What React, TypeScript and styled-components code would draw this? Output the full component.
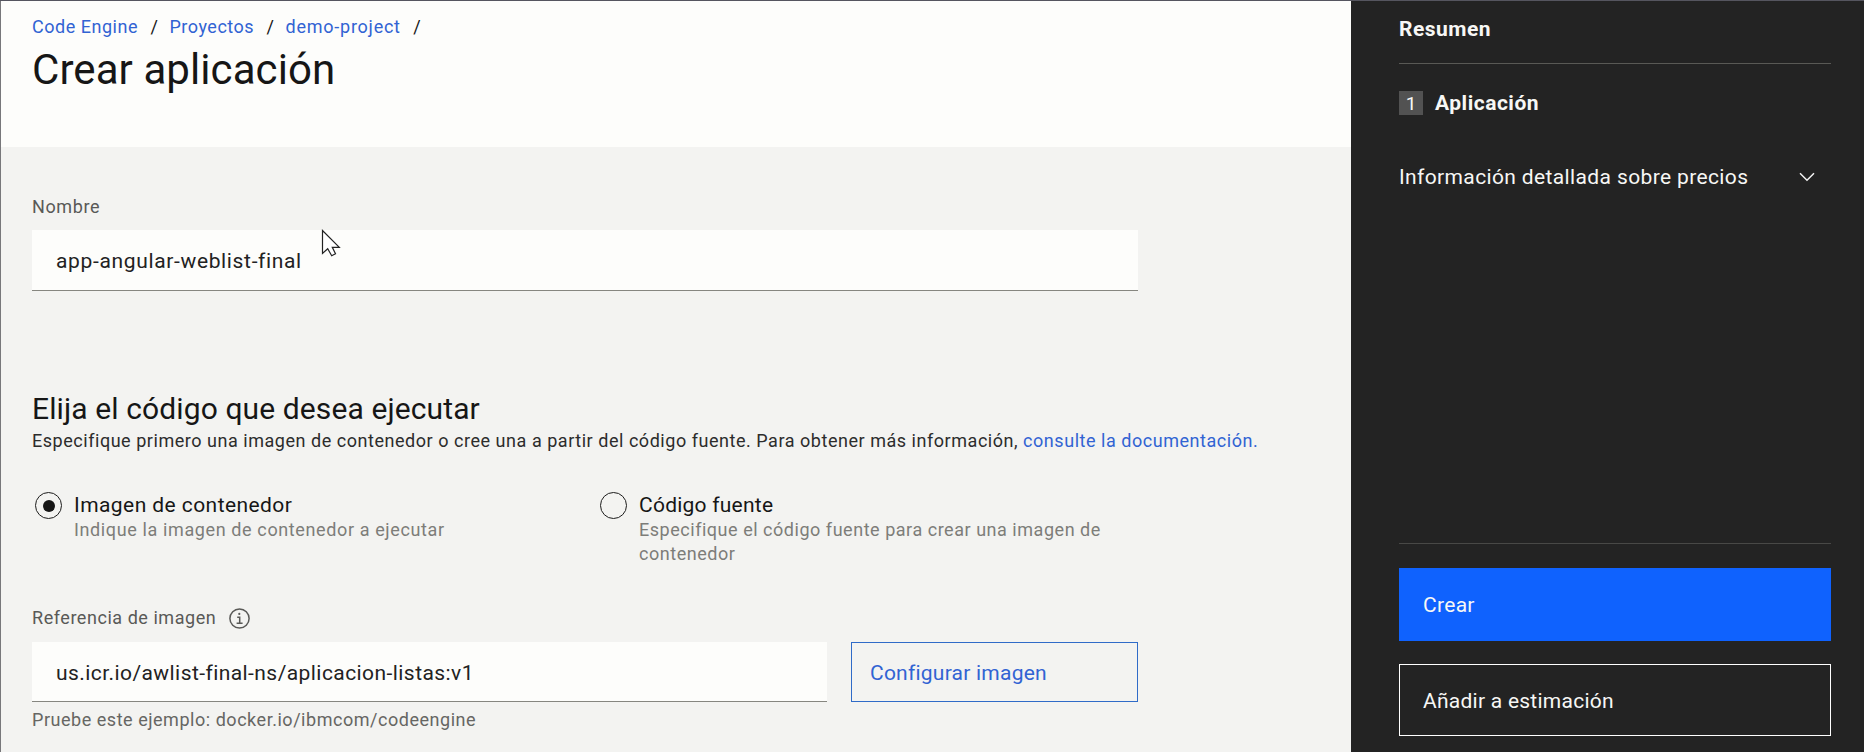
import React from 'react';
import styled, { createGlobalStyle } from 'styled-components';

const GlobalStyle = createGlobalStyle`
  *, *::before, *::after { box-sizing: border-box; }
  body {
    margin: 0;
    background: #f3f3f1;
    font-family: Roboto, "Liberation Sans", sans-serif;
    color: #161616;
  }
  h1, h2, p { margin: 0; font-weight: 400; }
`;

const Page = styled.div`
  display: flex;
  width: 1864px;
  height: 752px;
  overflow: hidden;
  border-top: 1px solid #55555f;
`;

const Main = styled.main`
  width: 1351px;
  border-left: 1px solid #77777a;
  background: #f3f3f1;
`;

const Header = styled.header`
  height: 146px;
  padding: 14px 31px 0;
  background: #fdfdfb;
`;

const Breadcrumb = styled.nav`
  display: flex;
  height: 24px;
  font-size: 18px;
  line-height: 24px;
`;

const Crumb = styled.a<{ $spacing: number }>`
  color: #3163d3;
  letter-spacing: ${(p) => p.$spacing}px;
`;

const Slash = styled.span`
  width: 31.5px;
  padding-left: 12.5px;
`;

const Title = styled.h1`
  margin-top: 7px;
  font-size: 42px;
  line-height: 48px;
  letter-spacing: 0.08px;
`;

const Form = styled.form`
  display: flex;
  flex-direction: column;
  width: 1318px;
  padding: 48px 0 0 31px;
`;

const Label = styled.label<{ $spacing?: number }>`
  display: flex;
  align-items: center;
  gap: 13px;
  font-size: 18px;
  line-height: 24px;
  letter-spacing: ${(p) => p.$spacing ?? 0.54}px;
  color: #595957;
`;

const Field = styled.div<{ $width: number; $height: number; $spacing: number }>`
  display: flex;
  align-items: center;
  width: ${(p) => p.$width}px;
  height: ${(p) => p.$height}px;
  padding: 2px 24px 0;
  background: #fdfdfb;
  border-bottom: 1px solid #868680;
  font-size: 21px;
  letter-spacing: ${(p) => p.$spacing}px;
  color: #222;
`;

const NameGroup = styled.div`
  display: flex;
  flex-direction: column;
  gap: 11px;
`;

const SectionTitle = styled.h2`
  margin-top: 100px;
  font-size: 30px;
  line-height: 36px;
  letter-spacing: 0.11px;
`;

const Description = styled.p`
  margin-top: 2px;
  font-size: 18px;
  line-height: 24px;
  letter-spacing: 0.535px;
  white-space: nowrap;
  color: #2c2c2c;
`;

const Link = styled.a`
  color: #3163d3;
`;

const Options = styled.div`
  display: grid;
  grid-template-columns: 565px 541px;
  margin-top: 39px;
`;

const Option = styled.div`
  display: flex;
  gap: 12px;
  padding-left: 3px;
`;

const Radio = styled.span`
  display: grid;
  place-items: center;
  flex: none;
  width: 27px;
  height: 27px;
  border: 1.5px solid #1c1c1c;
  border-radius: 50%;
`;

const RadioDot = styled.span`
  width: 12px;
  height: 12px;
  border-radius: 50%;
  background: #161616;
`;

const OptionLabel = styled.div<{ $spacing: number }>`
  font-size: 21px;
  line-height: 26px;
  letter-spacing: ${(p) => p.$spacing}px;
`;

const OptionHint = styled.p<{ $spacing: number }>`
  font-size: 18px;
  line-height: 24px;
  letter-spacing: ${(p) => p.$spacing}px;
  color: #7d7d79;
`;

const ImageGroup = styled.div`
  display: flex;
  flex-direction: column;
  margin-top: 40px;
`;

const ImageRow = styled.div`
  display: flex;
  justify-content: space-between;
  align-items: flex-end;
  width: 1106px;
  margin-top: 12px;
`;

const ConfigureButton = styled.div`
  display: flex;
  align-items: center;
  width: 287px;
  height: 60px;
  padding: 2px 18px 0;
  border: 1px solid #2f6bc8;
  font-size: 21px;
  letter-spacing: 0.23px;
  color: #3163d3;
`;

const Helper = styled.p`
  margin-top: 6px;
  font-size: 18px;
  line-height: 24px;
  letter-spacing: 0.53px;
  color: #666663;
`;

const Summary = styled.aside`
  display: flex;
  flex-direction: column;
  width: 513px;
  padding: 14px 33px 16px 48px;
  background: #232323;
  color: #f7f7f5;
  font-size: 21px;
`;

const SummaryTitle = styled.h2`
  height: 49px;
  padding-bottom: 20px;
  border-bottom: 1px solid #595955;
  font-size: 21px;
  font-weight: 700;
  line-height: 28px;
  letter-spacing: 0.5px;
`;

const Step = styled.div`
  display: flex;
  align-items: center;
  gap: 12px;
  height: 24px;
  margin-top: 27px;
  font-weight: 700;
  letter-spacing: 0.5px;
`;

const StepNumber = styled.span`
  display: grid;
  place-items: center;
  width: 24px;
  height: 24px;
  background: #525252;
  font-size: 19px;
  font-weight: 400;
  letter-spacing: 0;
`;

const Pricing = styled.div`
  display: flex;
  align-items: center;
  justify-content: space-between;
  height: 28px;
  margin-top: 48px;
  padding-right: 16px;
  letter-spacing: 0.37px;
  white-space: nowrap;
`;

const Actions = styled.div`
  display: flex;
  flex-direction: column;
  gap: 23px;
  margin-top: auto;
  padding-top: 24px;
  border-top: 1px solid #484846;
`;

const Action = styled.div<{ $primary?: boolean; $spacing: number }>`
  display: flex;
  align-items: center;
  height: ${(p) => (p.$primary ? 73 : 72)}px;
  padding: 1px 23px 0;
  border: 1px solid ${(p) => (p.$primary ? '#0f62fe' : '#fff')};
  background: ${(p) => (p.$primary ? '#0f62fe' : 'transparent')};
  letter-spacing: ${(p) => p.$spacing}px;
`;

const Cursor = styled.svg`
  position: absolute;
  left: 321px;
  top: 229px;
`;

const InfoIcon = () => (
  <svg width="21" height="21" viewBox="0 0 21 21" fill="none" stroke="#595957">
    <circle cx="10.5" cy="10.5" r="9.6" strokeWidth="1.5" />
    <path d="M8.2 9.2h2.5v6M7.6 15.2h6" strokeWidth="1.5" />
    <circle cx="10.3" cy="5.9" r="1.1" fill="#595957" stroke="none" />
  </svg>
);

const ChevronIcon = () => (
  <svg width="16" height="10" viewBox="0 0 16 10" fill="none" stroke="#f4f4f4" strokeWidth="1.5">
    <path d="M1 1.3l7 7 7-7" />
  </svg>
);

export default function App() {
  return (
    <>
      <GlobalStyle />
      <Page>
        <Main>
          <Header>
            <Breadcrumb>
              <Crumb $spacing={0.52}>Code Engine</Crumb>
              <Slash>/</Slash>
              <Crumb $spacing={0.5}>Proyectos</Crumb>
              <Slash>/</Slash>
              <Crumb $spacing={0.75}>demo-project</Crumb>
              <Slash>/</Slash>
            </Breadcrumb>
            <Title>Crear aplicación</Title>
          </Header>
          <Form>
            <NameGroup>
              <Label $spacing={0.6}>Nombre</Label>
              <Field $width={1106} $height={61} $spacing={0.65}>app-angular-weblist-final</Field>
            </NameGroup>
            <SectionTitle>Elija el código que desea ejecutar</SectionTitle>
            <Description>
              Especifique primero una imagen de contenedor o cree una a partir del código fuente. Para obtener más
              información, <Link>consulte la documentación.</Link>
            </Description>
            <Options>
              <Option>
                <Radio>
                  <RadioDot />
                </Radio>
                <div>
                  <OptionLabel $spacing={0.43}>Imagen de contenedor</OptionLabel>
                  <OptionHint $spacing={0.62}>Indique la imagen de contenedor a ejecutar</OptionHint>
                </div>
              </Option>
              <Option>
                <Radio />
                <div>
                  <OptionLabel $spacing={0.24}>Código fuente</OptionLabel>
                  <OptionHint $spacing={0.53}>Especifique el código fuente para crear una imagen de contenedor</OptionHint>
                </div>
              </Option>
            </Options>
            <ImageGroup>
              <Label>
                Referencia de imagen
                <InfoIcon />
              </Label>
              <ImageRow>
                <Field $width={795} $height={60} $spacing={0.43}>us.icr.io/awlist-final-ns/aplicacion-listas:v1</Field>
                <ConfigureButton>Configurar imagen</ConfigureButton>
              </ImageRow>
              <Helper>Pruebe este ejemplo: docker.io/ibmcom/codeengine</Helper>
            </ImageGroup>
          </Form>
        </Main>
        <Summary>
          <SummaryTitle>Resumen</SummaryTitle>
          <Step>
            <StepNumber>1</StepNumber>
            Aplicación
          </Step>
          <Pricing>
            Información detallada sobre precios
            <ChevronIcon />
          </Pricing>
          <Actions>
            <Action $primary $spacing={0.3}>Crear</Action>
            <Action $spacing={0.25}>Añadir a estimación</Action>
          </Actions>
        </Summary>
        <Cursor width="21" height="29" viewBox="0 0 21 29">
          <path
            d="M1.5 1.5v23l5.2-4.8 4 7 3.8-2-3.2-6.4h7z"
            fill="#fff"
            stroke="#222"
            strokeWidth="1.2"
          />
        </Cursor>
      </Page>
    </>
  );
}
